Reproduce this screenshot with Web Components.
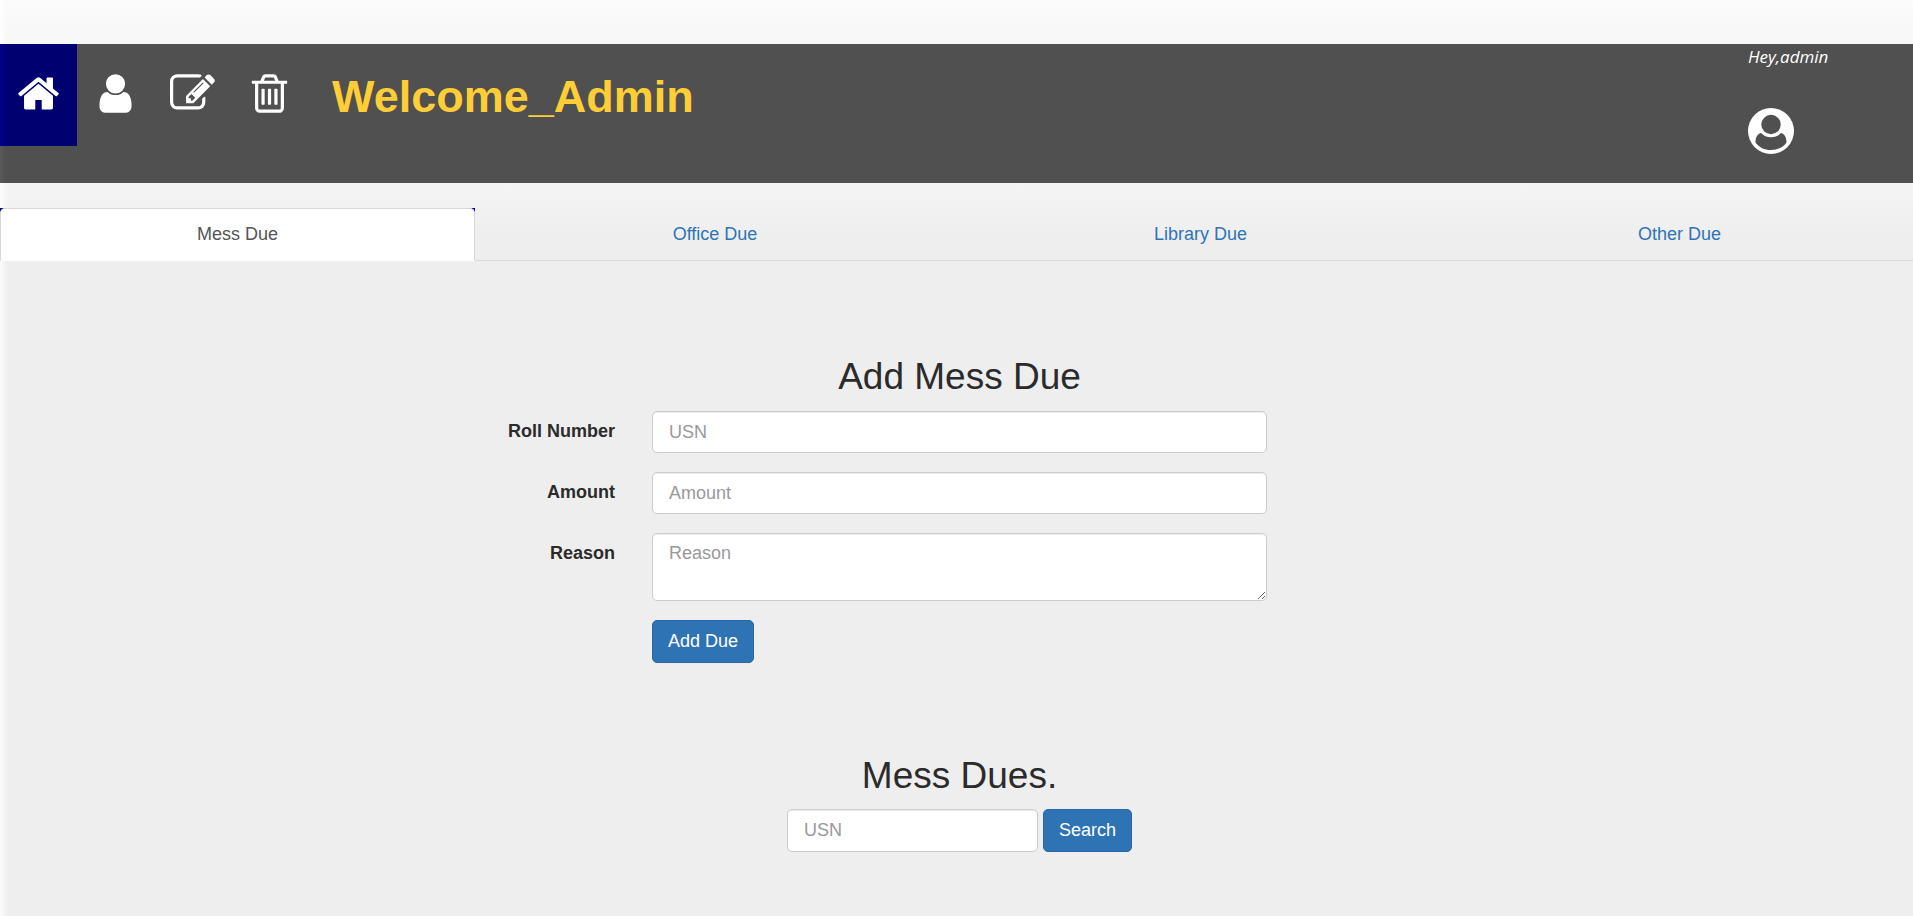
<!DOCTYPE html>
<html lang="en">
<head>
<meta charset="utf-8">
<title>Admin dues</title>
<style>
  html { min-height: 100%; }
  body {
    margin: 0;
    padding-top: 44px;
    min-height: 100vh;
    box-sizing: border-box;
    font: 18px/25px "Liberation Sans", Arial, sans-serif;
    color: #2b2b2b;
    background:
      linear-gradient(to right, rgba(255,255,255,.8), rgba(255,255,255,0) 8px),
      linear-gradient(to bottom, #fbfbfb 0, #f7f7f7 44px, #f4f4f4 183px, #eee 240px, #eee 100%);
  }
</style>
</head>
<body>
<admin-header>
  <nav-icon slot="nav" name="home" label="Home" active></nav-icon>
  <nav-icon slot="nav" name="user" label="Users"></nav-icon>
  <nav-icon slot="nav" name="edit" label="Edit"></nav-icon>
  <nav-icon slot="nav" name="trash" label="Delete"></nav-icon>
  <span slot="title">Welcome_Admin</span>
  <span slot="greeting">Hey,admin</span>
</admin-header>
<due-tabs></due-tabs>
<due-form></due-form>
<due-search></due-search>

<script>
const ICONS = {
  home: 'M1472 992v480q0 26-19 45t-45 19h-384v-384h-256v384h-384q-26 0-45-19t-19-45v-480q0-1 .5-3t.5-3l575-474 575 474q1 2 1 6zm223-69l-62 74q-8 9-21 11h-3q-13 0-21-7l-692-577-692 577q-12 8-24 7-13-2-21-11l-62-74q-8-10-7-23.5t11-21.5l719-599q32-26 76-26t76 26l244 204v-195q0-14 9-23t23-9h192q14 0 23 9t9 23v408l219 182q10 8 11 21.5t-7 23.5z',
  user: 'M1536 1399q0 109-62.5 187t-150.5 78h-854q-88 0-150.5-78t-62.5-187q0-85 8.5-160.5t31.5-152 58.5-131 94-89 134.5-34.5q131 128 313 128t313-128q76 0 134.5 34.5t94 89 58.5 131 31.5 152 8.5 160.5zm-256-887q0 159-112.5 271.5t-271.5 112.5-271.5-112.5-112.5-271.5 112.5-271.5 271.5-112.5 271.5 112.5 112.5 271.5z',
  edit: 'M888 1184l116-116-152-152-116 116v56h96v96h56zm440-720q-16-16-33 1l-350 350q-17 17-1 33t33-1l350-350q17-17 1-33zm80 594v190q0 119-84.5 203.5t-203.5 84.5h-832q-119 0-203.5-84.5t-84.5-203.5v-832q0-119 84.5-203.5t203.5-84.5h832q63 0 117 25 15 7 18 23 3 17-9 29l-49 49q-14 14-32 8-23-6-45-6h-832q-66 0-113 47t-47 113v832q0 66 47 113t113 47h832q66 0 113-47t47-113v-126q0-13 9-22l64-64q15-15 35-7t20 29zm-96-738l288 288-672 672h-288v-288zm444 132l-92 92-288-288 92-92q28-28 68-28t68 28l152 152q28 28 28 68t-28 68z',
  trash: 'M704 736v576q0 14-9 23t-23 9h-64q-14 0-23-9t-9-23v-576q0-14 9-23t23-9h64q14 0 23 9t9 23zm256 0v576q0 14-9 23t-23 9h-64q-14 0-23-9t-9-23v-576q0-14 9-23t23-9h64q14 0 23 9t9 23zm256 0v576q0 14-9 23t-23 9h-64q-14 0-23-9t-9-23v-576q0-14 9-23t23-9h64q14 0 23 9t9 23zm128 724v-948h-896v948q0 22 7 40.5t14.5 27 10.5 8.5h832q3 0 10.5-8.5t14.5-27 7-40.5zm-672-1076h448l-48-117q-7-9-17-11h-317q-10 2-17 11zm928 32v64q0 14-9 23t-23 9h-96v948q0 83-47 143.5t-113 60.5h-832q-66 0-113-58.5t-47-141.5v-952h-96q-14 0-23-9t-9-23v-64q0-14 9-23t23-9h309l70-167q15-37 54-63t79-26h320q40 0 79 26t54 63l70 167h309q14 0 23 9t9 23z'
};

const FIELD_CSS = `
  *, *::before { box-sizing: border-box; }
  h2 { margin: 0; font-size: 37px; line-height: 42px; font-weight: 400; text-align: center; }
  input, textarea {
    display: block; width: 100%; min-height: 42px; margin: 0; padding: 7px 16px;
    font: inherit; color: #555; background: #fff;
    border: 1px solid #ccc; border-radius: 5px;
    box-shadow: inset 0 1px 1px rgba(0,0,0,.075);
  }
  textarea { height: 68px; resize: vertical; }
  ::placeholder { color: #999; opacity: 1; }
  button {
    height: 43px; padding: 0 15px; font: inherit; color: #fff; cursor: pointer;
    background: #2e74b5; border: 1px solid #2a68a3; border-radius: 5px;
  }`;

function define(name, render) {
  customElements.define(name, class extends HTMLElement {
    constructor() {
      super();
      this.attachShadow({ mode: 'open' });
    }
    connectedCallback() {
      this.shadowRoot.innerHTML = render(this);
    }
  });
}

define('nav-icon', el => `
  <style>
    :host { display: block; }
    :host([active]) { background: linear-gradient(to right, #000088, #000070 8px); }
    a { display: block; height: 102px; padding: 27px 16px; box-sizing: border-box; color: #fff; }
    svg { display: block; width: 45px; height: 45px; fill: currentColor; }
  </style>
  <a href="#${el.getAttribute('name')}" aria-label="${el.getAttribute('label')}">
    <svg viewBox="0 0 1792 1792" aria-hidden="true"><path d="${ICONS[el.getAttribute('name')]}"/></svg>
  </a>`);

define('admin-header', () => `
  <style>
    :host { display: block; background: linear-gradient(to right, rgba(255,255,255,.06), rgba(255,255,255,0) 6px), #505050; }
    header { display: flex; align-items: flex-start; height: 139px; }
    nav { display: flex; }
    h1 { margin: 0; padding: 27px 24px; font-size: 45px; line-height: 51px; color: #ffcd35; }
    .account { margin-left: auto; width: 165px; color: #fff; }
    .greeting { margin: 0 0 39px; font: italic 500 17px/25px "Open Sans", sans-serif; }
    .account a { display: block; width: 46px; color: inherit; }
    svg { display: block; width: 46px; height: 46px; }
  </style>
  <header>
    <nav aria-label="Main"><slot name="nav"></slot></nav>
    <h1><slot name="title"></slot></h1>
    <div class="account">
      <p class="greeting"><slot name="greeting"></slot></p>
      <a href="#account" aria-label="Account">
        <svg viewBox="0 0 46 46" aria-hidden="true">
          <circle cx="23" cy="23" r="23" fill="currentColor"/>
          <circle cx="23" cy="16.5" r="9.7" fill="#505050"/>
          <path fill="#505050" d="M13 25C9 26 7.5 30 7.5 34.5C11 39.500 16.500 42 23 42S35 39.500 38.500 34.500C38.500 30 37 26 33 25C30.500 27.800 27 29.200 23 29.200S15.500 27.800 13 25Z"/>
        </svg>
      </a>
    </div>
  </header>`);

define('due-tabs', () => `
  <style>
    :host { display: block; padding-top: 25px; }
    ul { display: grid; grid-template-columns: 475fr 480fr 491fr 467fr; margin: 0; padding: 0; list-style: none; }
    li:first-child { background: linear-gradient(#000080, #000080) top / 100% 8px no-repeat; }
    a {
      display: block; height: 53px; padding: 14px 0 13px; box-sizing: border-box; text-align: center;
      color: #2e74b5; text-decoration: none; border-bottom: 1px solid #d9d9d9;
    }
    a[aria-current] {
      color: #555; background: #fff; border: 1px solid #d9d9d9; border-bottom-color: #fff;
      border-radius: 5px 5px 0 0; padding-top: 13px;
    }
  </style>
  <nav aria-label="Due type">
    <ul>
      <li><a href="#mess" aria-current="page">Mess Due</a></li>
      <li><a href="#office">Office Due</a></li>
      <li><a href="#library">Library Due</a></li>
      <li><a href="#other">Other Due</a></li>
    </ul>
  </nav>`);

define('due-form', () => `
  <style>
    ${FIELD_CSS}
    :host { display: block; padding-top: 95px; }
    form { display: grid; grid-template-columns: 652fr 615fr 646fr; row-gap: 19px; }
    h2 { grid-column: 2; margin-bottom: -6px; }
    label { grid-column: 1; padding: 8px 37px 0 0; text-align: right; font-weight: 700; }
    input, textarea, button { grid-column: 2; }
    button { justify-self: start; }
  </style>
  <form>
    <h2>Add Mess Due</h2>
    <label for="roll">Roll Number</label><input id="roll" type="text" placeholder="USN">
    <label for="amount">Amount</label><input id="amount" type="text" placeholder="Amount">
    <label for="reason">Reason</label><textarea id="reason" placeholder="Reason"></textarea>
    <button type="button">Add Due</button>
  </form>`);

define('due-search', () => `
  <style>
    ${FIELD_CSS}
    :host { display: block; padding: 92px 0 40px; }
    section { display: grid; grid-template-columns: 652fr 615fr 646fr; row-gap: 12px; }
    h2, form { grid-column: 2; }
    form { display: flex; justify-content: center; gap: 5px; }
    input { width: 251px; }
  </style>
  <section>
    <h2>Mess Dues.</h2>
    <form role="search">
      <input type="text" placeholder="USN" aria-label="USN">
      <button type="button">Search</button>
    </form>
  </section>`);
</script>
</body>
</html>
